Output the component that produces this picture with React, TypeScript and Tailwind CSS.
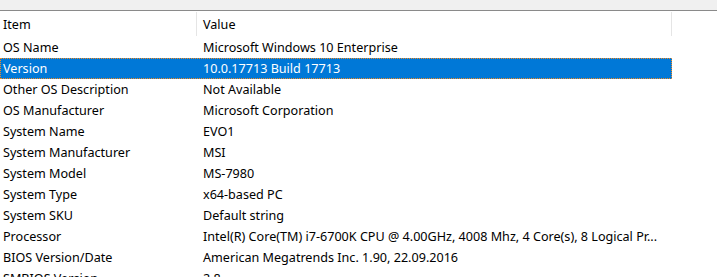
const rows: [string, string][] = [
  ["OS Name", "Microsoft Windows 10 Enterprise"],
  ["Version", "10.0.17713 Build 17713"],
  ["Other OS Description", "Not Available"],
  ["OS Manufacturer", "Microsoft Corporation"],
  ["System Name", "EVO1"],
  ["System Manufacturer", "MSI"],
  ["System Model", "MS-7980"],
  ["System Type", "x64-based PC"],
  ["System SKU", "Default string"],
  ["Processor", "Intel(R) Core(TM) i7-6700K CPU @ 4.00GHz, 4008 Mhz, 4 Core(s), 8 Logical Pr..."],
  ["BIOS Version/Date", "American Megatrends Inc. 1.90, 22.09.2016"],
  ["SMBIOS Version", "2.8"],
];

export default function App() {
  return (
    <div
      className="w-[717px] h-[277px] overflow-hidden bg-white text-[12.6px] text-black"
      style={{ fontFamily: '"Noto Sans", "Open Sans", sans-serif' }}
    >
      {/* toolbar strip */}
      <div className="h-[11px] bg-[#f0f0f0] border-b border-[#8a8a8a]" />

      {/* header */}
      <div className="flex h-[26px] w-[672px]">
        <div className="w-[197px] flex items-center pl-[3px] pt-[2px] border-r border-[#e5e5e5] my-[1px]">Item</div>
        <div className="flex-1 flex items-center pl-[6px] pt-[2px] border-r border-[#e5e5e5] my-[1px]">Value</div>
      </div>

      {/* rows */}
      <div className="w-[672px]">
        {rows.map(([item, value]) => {
          const selected = item === "Version";
          return (
            <div
              key={item}
              className={
                selected
                  ? "flex h-[21px] items-center pt-[2px] bg-[#0078d7] text-white outline-1 outline-dotted outline-[#f08a24] -outline-offset-1"
                  : "flex h-[21px] items-center pt-[2px]"
              }
            >
              <div className="w-[197px] pl-[3px] whitespace-nowrap">{item}</div>
              <div className="flex-1 pl-[6px] whitespace-nowrap">{value}</div>
            </div>
          );
        })}
      </div>
    </div>
  );
}
